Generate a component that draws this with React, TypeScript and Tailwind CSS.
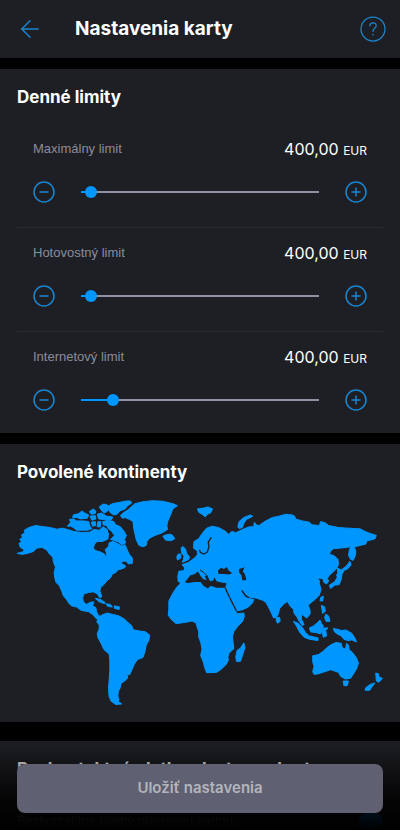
import React from 'react';
import { ArrowLeft } from 'lucide-react';

interface Limit {
  id: string;
  label: string;
  value: number;
  max: number;
}

const LIMITS: Limit[] = [
  { id: 'max', label: 'Maximálny limit', value: 400, max: 25000 },
  { id: 'cash', label: 'Hotovostný limit', value: 400, max: 25000 },
  { id: 'internet', label: 'Internetový limit', value: 400, max: 3500 },
];

const AMERICAS = [
  // mainland north
  '20,188 42,182 38,174 30,170 26,158 34,152 28,146 36,140 34,132 44,126 42,118 56,110 76,104 96,107 120,110 140,115 158,112 176,117 192,122 215,125 240,124 252,116 268,118 280,108 292,116 296,130 294,145 278,152 262,152 254,160 250,172 258,180 272,184 284,190 287,203 290,188 286,176 296,168 298,156 310,152 326,160 336,166 346,162 352,176 358,190 368,202 368,218 356,220 350,212 338,212 334,218 348,226 344,232 324,238 318,246 308,250 302,262 292,270 282,282 272,292 270,302 276,318 270,322 262,310 250,304 236,306 222,310 218,322 220,334 230,342 240,336 252,334 248,346 258,352 260,364 266,376 280,378 288,378 274,384 268,390 258,384 250,374 236,364 214,360 200,350 184,346 176,338 170,328 160,316 154,300 148,286 138,276 134,262 132,246 136,230 130,214 128,200 118,190 110,178 96,170 80,172 70,182 52,188 36,191',
  // arctic islands
  '172,106 182,94 178,86 190,84 200,90 220,90 236,92 240,106 246,114 232,118 200,118 190,110 182,106',
  '188,80 190,72 206,68 216,60 224,66 236,72 232,82 212,84 200,80',
  '238,62 250,54 258,60 256,68 244,70',
  '240,76 256,74 258,84 246,88',
  '268,48 278,40 290,40 298,48 294,60 284,66 276,60',
  '262,70 276,66 290,76 308,78 306,86 284,86 266,84',
  '244,94 256,92 258,104 248,106',
  '264,92 272,92 272,108 262,108',
  '278,92 296,88 312,92 318,102 332,108 342,120 350,134 344,146 348,156 336,162 326,154 310,148 302,146 314,134 306,122 296,114 290,104 280,102',
  '294,46 308,38 330,34 350,30 362,30 366,36 354,44 346,54 330,60 322,70 312,72 300,64',
  // caribbean
  '256,324 270,326 286,336 284,340 268,334',
  '288,340 302,342 308,350 294,348',
  '314,346 330,350 328,357 314,354',
  // south
  '260,394 272,380 276,374 292,368 308,372 326,376 344,386 354,396 366,406 370,418 388,422 406,424 420,434 418,450 410,464 406,484 400,502 384,508 374,522 368,536 360,554 352,554 354,564 344,574 334,580 332,592 326,604 324,618 328,630 324,634 336,642 318,644 304,634 298,620 296,596 298,570 300,540 300,510 298,492 282,478 274,460 264,442 262,430 268,416 268,404',
];

const NORTH_ATLANTIC = [
  '332,74 340,66 356,56 364,48 376,38 400,32 430,29 460,31 490,38 504,44 490,54 484,70 476,88 472,104 474,116 458,126 436,134 420,142 412,152 410,164 400,168 388,164 380,148 376,130 372,112 370,92 360,86 346,80 338,82',
  '460,136 470,132 482,130 490,134 496,144 484,150 468,148',
  '564,54 580,52 596,48 610,54 604,66 594,70 588,78 578,70 568,64',
  '686,108 690,92 704,80 724,72 731,76 712,86 704,98 700,110 690,113',
  '515,172 520,167 528,174 532,188 541,200 536,208 518,215 522,206 524,196 517,188',
  '502,198 506,190 514,190 514,202 504,208',
];

const OLD_WORLD = [
  '506,272 505,258 508,242 524,240 526,232 518,222 536,216 550,206 558,200 564,192 564,182 560,178 552,172 554,152 568,144 580,126 592,112 608,106 628,110 650,122 659,132 664,124 670,122 680,126 700,116 720,108 734,108 736,94 742,102 750,104 770,90 790,80 810,76 830,70 850,72 858,76 860,84 880,90 902,94 910,102 932,104 936,92 950,96 960,104 990,110 1020,112 1055,114 1070,122 1086,128 1104,134 1100,144 1086,148 1076,150 1072,160 1056,164 1038,168 1042,184 1040,196 1034,209 1026,206 1020,194 1022,180 1026,168 1012,170 996,172 974,174 966,182 962,190 978,196 988,206 990,222 982,236 972,246 962,254 956,264 960,272 954,280 946,276 942,264 926,262 932,270 932,280 937,296 932,314 920,326 908,336 898,344 904,360 904,371 894,383 886,377 878,371 878,387 886,403 880,405 870,391 864,379 856,369 854,357 844,347 836,333 824,341 812,355 808,371 802,381 794,383 786,365 778,349 770,335 760,329 742,323 722,320 712,316 704,304 700,304 708,320 724,325 734,327 730,338 718,350 700,358 680,362 682,370 704,368 706,378 700,394 686,408 674,424 670,440 672,458 674,476 660,488 656,502 658,510 650,524 638,536 622,547 592,548 586,532 582,516 574,496 578,476 574,456 568,440 568,424 562,406 560,398 548,392 528,396 500,400 486,388 476,374 478,356 478,332 490,308 502,290 512,280 512,276',
  '704,458 708,472 700,496 694,514 682,514 680,500 684,480 694,474',
];

const ASIA_PACIFIC = [
  '302,-103 306,-93 296,-81 284,-75 278,-63 276,-49 270,-33 256,-31 244,-21 240,-31 256,-41 264,-55 262,-63 266,-67 264,-83 276,-77 292,-89',
  '214,6 222,2 220,17 212,16',
  '216,30 226,34 228,48 220,54',
  '230,56 238,62 242,78 230,78 226,66',
  '80,66 90,66 92,78 84,84 80,76',
  '132,78 146,84 160,98 168,112 180,122 206,128 206,136 180,132 164,126 150,110 142,94',
  '180,98 192,92 202,84 212,74 216,84 222,92 218,104 214,116 200,112 184,110',
  '222,98 236,98 229,106 232,122 222,126 219,112',
  '252,100 266,102 276,106 290,104 308,114 318,130 322,140 308,134 296,136 284,132 276,122 264,116 256,110',
  '190,182 208,178 222,168 232,158 246,148 260,142 276,144 278,154 284,162 290,158 292,144 298,150 300,164 310,172 322,188 328,204 322,222 312,238 304,250 288,252 274,244 268,232 256,228 244,224 226,230 208,236 194,238 190,230 194,214 190,200',
  '282,258 298,258 294,272 284,272',
  '380,234 388,236 390,246 400,250 390,262 382,258',
  '378,264 370,274 362,286 348,286 350,278 364,268',
];

// mediterranean, black sea, caspian
const SEAS = [
  '526,275 536,263 542,255 556,250 566,243 574,256 582,266 592,268 586,258 594,254 602,272 612,270 616,260 622,272 636,276 652,278 648,292 622,292 604,286 596,294 582,286 574,274 556,274 536,277',
  '626,240 636,231 644,235 653,229 658,240 669,247 660,252 642,250 628,250',
  '690,235 706,230 701,243 708,252 712,268 700,270 697,254 690,246',
];

function Lands({ shapes }: { shapes: string[] }) {
  return (
    <>
      {shapes.map((points) => (
        <polygon key={points} points={points} />
      ))}
    </>
  );
}

function WorldMap() {
  return (
    <svg viewBox="20 27 1104 621" className="block w-full" role="img" aria-label="Mapa sveta">
      <g fill="#0096ff" stroke="#0096ff" strokeWidth="3" strokeLinejoin="round">
        <Lands shapes={AMERICAS} />
        <Lands shapes={NORTH_ATLANTIC} />
        <Lands shapes={OLD_WORLD} />
        <g transform="translate(722 315)">
          <Lands shapes={ASIA_PACIFIC} />
        </g>
      </g>
      <g fill="#1e1f24">
        <Lands shapes={SEAS} />
      </g>
      <g fill="none" stroke="#1e1f24" strokeWidth="4" strokeLinejoin="round">
        <path d="M606 140 L597 154 L599 168 L594 184 L584 190 L574 186 L570 178" />
        <path d="M572 238 L584 246 L594 257" strokeWidth="3" />
        <path d="M648 292 L660 318 L672 342 L682 362" />
        <path d="M698 300 L708 314 L720 322" />
      </g>
    </svg>
  );
}

function StepButton({ label, plus, onClick }: { label: string; plus?: boolean; onClick: () => void }) {
  return (
    <button type="button" aria-label={label} onClick={onClick} className="shrink-0 text-[#1b86cf]">
      <svg viewBox="0 0 22 22" className="block size-[22px]" fill="none" stroke="currentColor" strokeWidth="1.5">
        <circle cx="11" cy="11" r="10" />
        <path d={plus ? 'M6.500 11h9M11 6.500v9' : 'M6.500 11h9'} />
      </svg>
    </button>
  );
}

function LimitRow({ limit }: { limit: Limit }) {
  const [value, setValue] = React.useState(limit.value);
  const ratio = value / limit.max;
  const fill = `calc(6px + (100% - 12px) * ${ratio})`;
  const step = (delta: number) => setValue(Math.min(limit.max, Math.max(0, value + delta)));

  return (
    <div className="border-b border-[#2b2c32] px-4 pt-[13px] pb-6 last:border-b-0 last:pb-[22px]">
      <div className="flex items-center justify-between">
        <label htmlFor={limit.id} className="text-[13px] leading-6 text-[#8b8c9c]">
          {limit.label}
        </label>
        <span className="font-[Inter] text-base leading-6 text-white">
          {value.toFixed(2).replace('.', ',')} <span className="text-xs">EUR</span>
        </span>
      </div>
      <div className="mt-5 flex items-center justify-between gap-[26px]">
        <StepButton label="Znížiť" onClick={() => step(-50)} />
        <input
          id={limit.id}
          type="range"
          min={0}
          max={limit.max}
          value={value}
          onChange={(e) => setValue(Number(e.target.value))}
          style={{ backgroundImage: `linear-gradient(to right, #0096ff ${fill}, #8f90a0 ${fill})` }}
          className="h-[2px] min-w-0 flex-1 appearance-none [&::-webkit-slider-thumb]:size-3 [&::-webkit-slider-thumb]:appearance-none [&::-webkit-slider-thumb]:rounded-full [&::-webkit-slider-thumb]:bg-[#0096ff]"
        />
        <StepButton label="Zvýšiť" plus onClick={() => step(50)} />
      </div>
    </div>
  );
}

function SectionTitle({ children }: { children: React.ReactNode }) {
  return <h2 className="font-[Inter] text-[17px] leading-6 font-bold">{children}</h2>;
}

export default function App() {
  return (
    <div className="relative flex h-screen flex-col overflow-hidden bg-black font-['Liberation_Sans',Arial,sans-serif] text-white">
      <header className="flex h-[58px] shrink-0 items-center bg-[#1e1f24] pr-[14px] pl-4">
        <button type="button" aria-label="Späť" className="text-[#1b86cf]">
          <ArrowLeft className="size-7" strokeWidth={1.25} />
        </button>
        <h1 className="ml-[31px] flex-1 font-[Inter] text-[19px] font-bold">Nastavenia karty</h1>
        <button type="button" aria-label="Pomocník" className="text-[#1b86cf]">
          <svg viewBox="0 0 26 26" className="block size-[26px]" fill="none" stroke="currentColor" strokeWidth="1.25">
            <circle cx="13" cy="13" r="12" />
            <path d="M9.800 10.200c0-2 1.400-3.400 3.200-3.400s3.200 1.200 3.200 3c0 2.400-3.200 2.700-3.200 5.400v.8M13 17.800v1.600" />
          </svg>
        </button>
      </header>

      <main className="flex-1 overflow-y-auto [scrollbar-width:none]">
        <section className="mt-[11px] bg-[#1e1f24] px-[17px] pt-4">
          <SectionTitle>Denné limity</SectionTitle>
          <div className="mt-[15px]">
            {LIMITS.map((limit) => (
              <LimitRow key={limit.id} limit={limit} />
            ))}
          </div>
        </section>

        <section className="mt-[11px] bg-[#1e1f24] px-[17px] pt-4 pb-4">
          <SectionTitle>Povolené kontinenty</SectionTitle>
          <div className="mt-4">
            <WorldMap />
          </div>
        </section>

        <section className="mt-[19px] bg-[#1e1f24] px-[17px] pt-4 pb-24">
          <SectionTitle>Bezkontaktné platby plastovou kartou</SectionTitle>
          <div className="mt-8 flex items-center justify-between">
            <label htmlFor="contactless" className="text-[13px] leading-4 text-[#8b8c9c]">
              Bezkontaktné platby plastovou kartou
            </label>
            <input
              id="contactless"
              type="checkbox"
              defaultChecked
              className="h-4 w-6 appearance-none rounded-full bg-[#0096ff]"
            />
          </div>
        </section>
      </main>

      {/* save bar fades the content that scrolls under it */}
      <footer className="absolute inset-x-0 bottom-0 bg-linear-to-b from-transparent via-black/80 via-60% to-black px-[17px] pt-6 pb-[17px]">
        <button
          type="button"
          className="h-[49px] w-full rounded-lg bg-[#5f6072] font-[Inter] text-[15px] font-semibold text-[#b4b5bb]"
        >
          Uložiť nastavenia
        </button>
      </footer>
    </div>
  );
}
